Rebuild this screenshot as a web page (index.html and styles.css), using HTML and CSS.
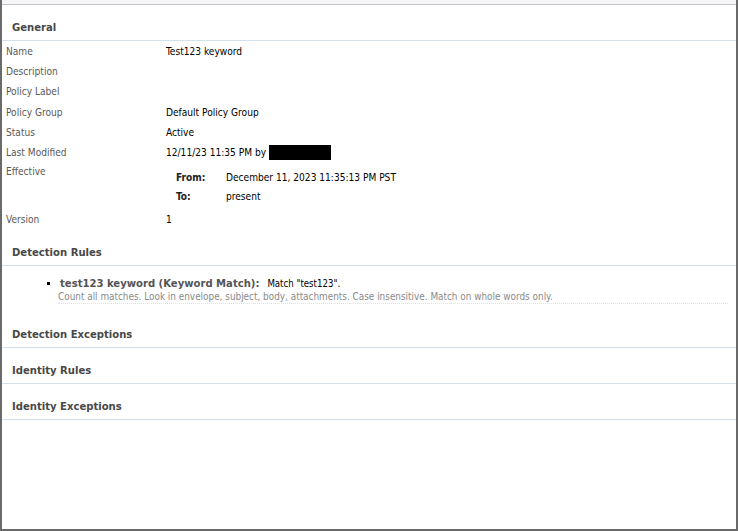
FILE: index.html
```html
<!DOCTYPE html>
<html lang="en">
<head>
  <meta charset="UTF-8">
  <title>Policy Details</title>
  <link rel="stylesheet" href="styles.css">
</head>
<body>
  <div class="dialog">
    <div class="topbar"></div>

    <div class="section-title">General</div>
    <table class="props">
      <tr><td class="label">Name</td><td class="value">Test123 keyword</td></tr>
      <tr><td class="label">Description</td><td class="value"></td></tr>
      <tr><td class="label">Policy Label</td><td class="value"></td></tr>
      <tr><td class="label">Policy Group</td><td class="value">Default Policy Group</td></tr>
      <tr><td class="label">Status</td><td class="value">Active</td></tr>
      <tr><td class="label">Last Modified</td><td class="value">12/11/23 11:35 PM by <span class="redacted"></span></td></tr>
      <tr class="effective">
        <td class="label">Effective</td>
        <td class="value">
          <table class="period">
            <tr><th>From:</th><td>December 11, 2023 11:35:13 PM PST</td></tr>
            <tr><th>To:</th><td>present</td></tr>
          </table>
        </td>
      </tr>
      <tr><td class="label">Version</td><td class="value">1</td></tr>
    </table>

    <div class="section-title">Detection Rules</div>
    <ul class="rules">
      <li>
        <span class="rule-name">test123 keyword (Keyword Match):</span>
        <span class="rule-match">Match "test123".</span>
        <div class="rule-desc">Count all matches. Look in envelope, subject, body, attachments. Case insensitive. Match on whole words only.</div>
      </li>
    </ul>

    <div class="section-title">Detection Exceptions</div>
    <div class="section-title">Identity Rules</div>
    <div class="section-title">Identity Exceptions</div>
  </div>
</body>
</html>
```

FILE: styles.css
```css
html, body {
  margin: 0;
  padding: 0;
  background: #fff;
}
body {
  font-family: "DejaVu Sans Condensed", "Liberation Sans", sans-serif;
  font-size: 10.1px;
  color: #000;
}
.dialog {
  box-sizing: border-box;
  width: 738px;
  height: 531px;
  border-left: 2px solid #6a6a6a;
  border-right: 2px solid #6a6a6a;
  border-bottom: 2px solid #6a6a6a;
  overflow: hidden;
}
.topbar {
  height: 4px;
  background: #f5f5f7;
  border-bottom: 1px solid #c4c4c4;
}
.section-title {
  font-weight: bold;
  font-size: 11.2px;
  color: #484848;
  line-height: 18px;
  padding: 14px 0 3px 10px;
  border-bottom: 1px solid #d4e1ea;
}
.props {
  border-collapse: collapse;
  margin-left: 4px;
}
.props > tbody > tr > td {
  padding: 0;
  height: 20.3px;
  vertical-align: middle;
}
.props .label {
  width: 160px;
  color: #5a5a5a;
}
.props > tbody > tr.effective > td {
  vertical-align: top;
  padding-top: 3px;
  height: 44px;
}
.period {
  border-collapse: collapse;
  margin: 2px 0 0 10px;
}
.period th,
.period td {
  padding: 0;
  height: 19px;
  text-align: left;
  vertical-align: middle;
}
.period th {
  width: 50px;
  font-weight: bold;
  color: #222;
}
.redacted {
  display: inline-block;
  width: 62px;
  height: 15px;
  background: #000;
  vertical-align: -4px;
}
.rules {
  margin: 0;
  padding: 11px 0 8px 58px;
  list-style: square;
}
.rules li {
  color: #000;
  line-height: 14px;
}
.rule-name {
  font-weight: bold;
  font-size: 11.2px;
  color: #555;
  margin-right: 5px;
}
.rule-match {
  font-size: 9.6px;
}
.rule-desc {
  color: #8a8a8a;
  font-size: 9.9px;
  line-height: 12px;
  margin: 0 8px 0 -2px;
  border-bottom: 1px dotted #e0e0e0;
}
```
